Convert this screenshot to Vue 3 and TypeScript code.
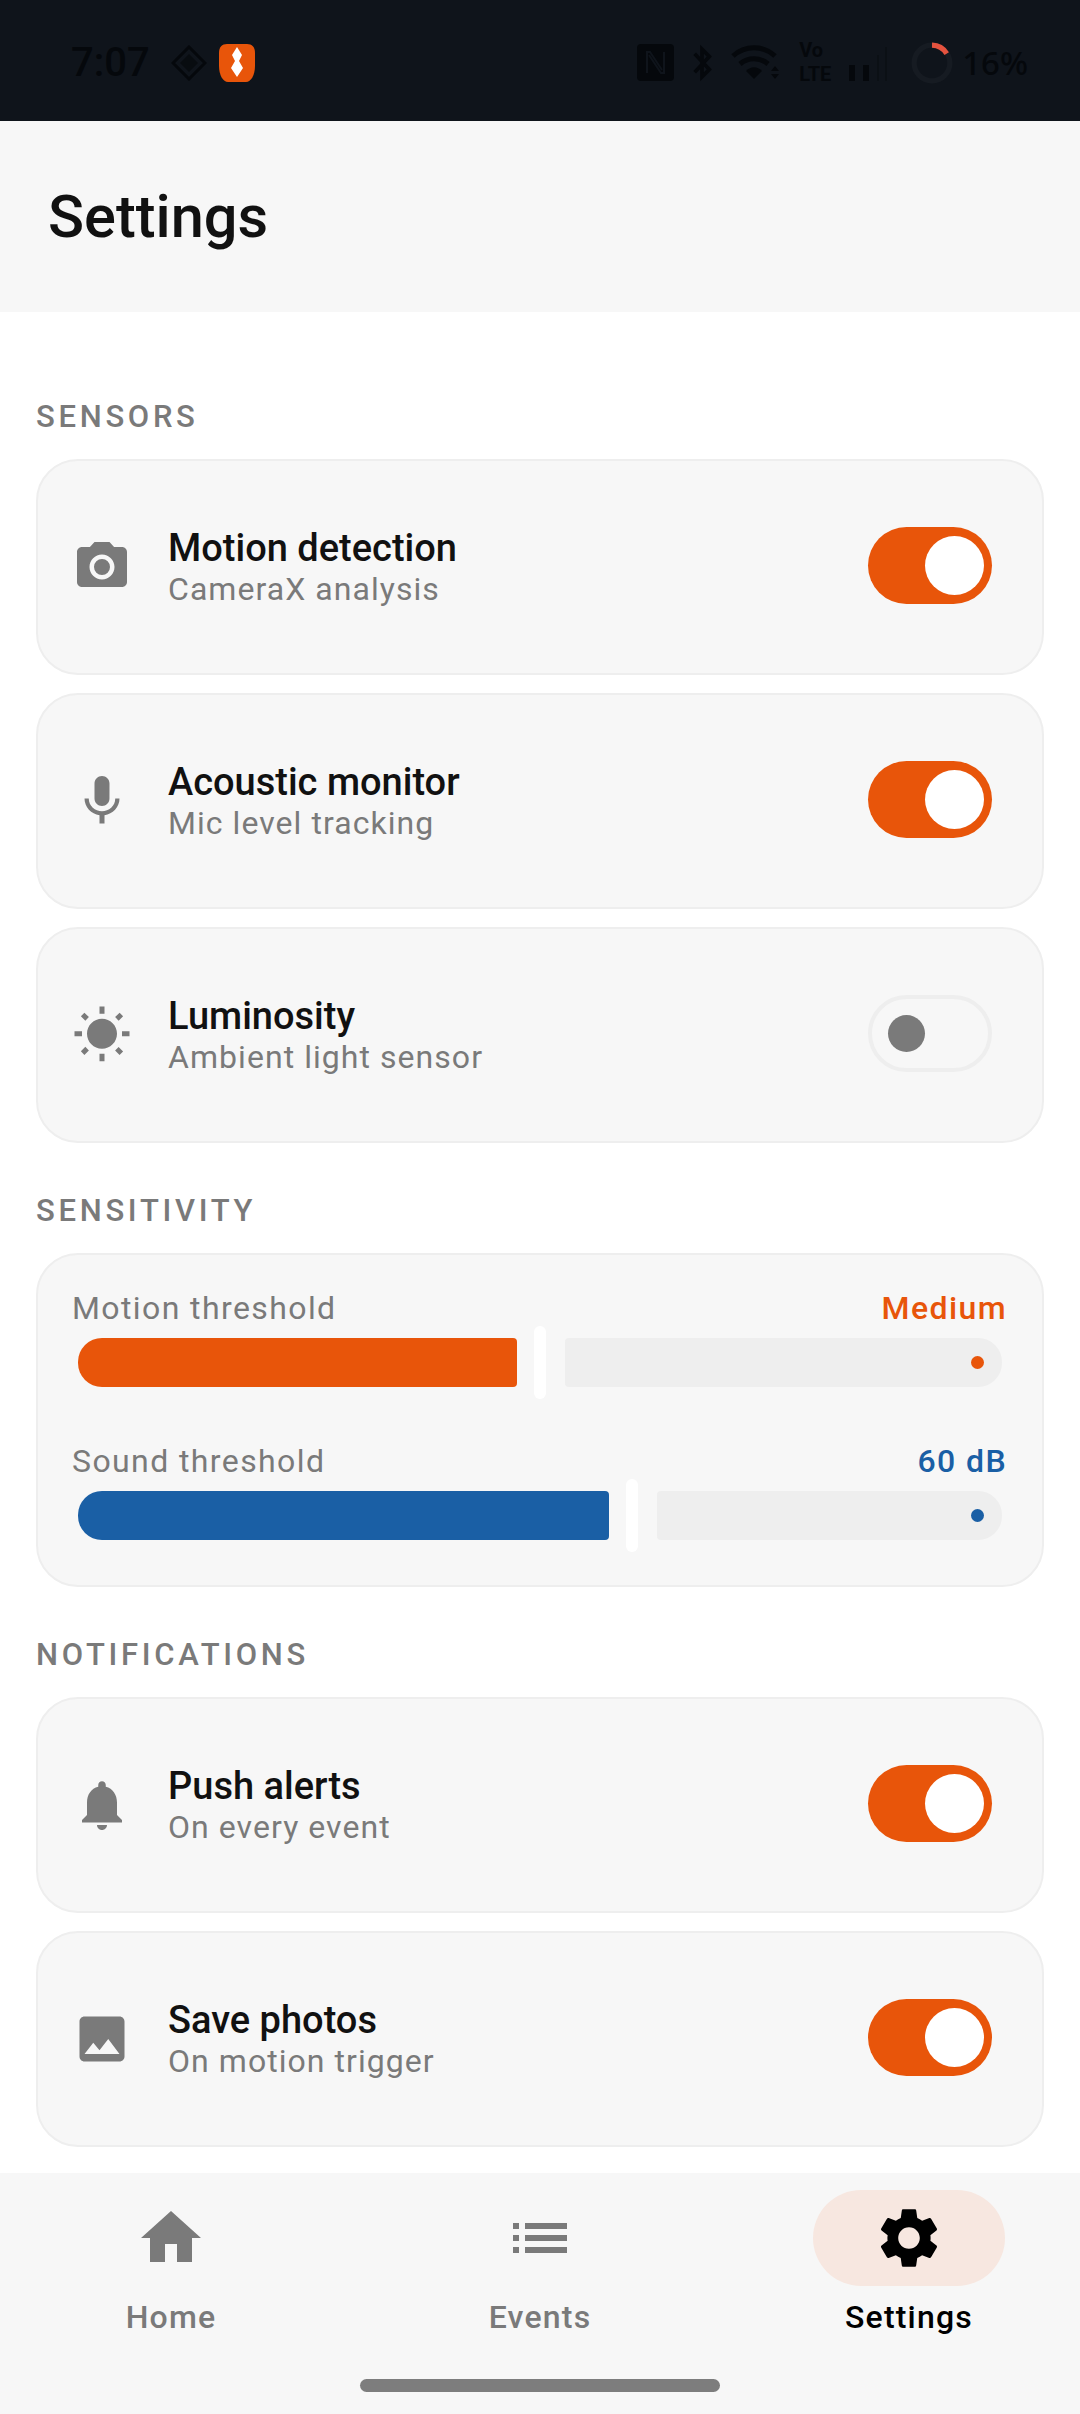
<script setup lang="ts">
interface Row {
  title: string
  sub: string
  icon: string
  on: boolean
}

const P = {
  camera: 'M12 15.2a3.2 3.2 0 1 0 0-6.4 3.2 3.2 0 0 0 0 6.4zM9 2 7.17 4H4c-1.1 0-2 .9-2 2v12c0 1.1.9 2 2 2h16c1.1 0 2-.9 2-2V6c0-1.1-.9-2-2-2h-3.17L15 2H9zm3 15c-2.76 0-5-2.24-5-5s2.24-5 5-5 5 2.24 5 5-2.24 5-5 5z',
  mic: 'M12 14c1.66 0 2.99-1.34 2.99-3L15 5c0-1.66-1.34-3-3-3S9 3.34 9 5v6c0 1.66 1.34 3 3 3zm5.3-3c0 3-2.54 5.1-5.3 5.1S6.7 14 6.7 11H5c0 3.41 2.72 6.23 6 6.72V21h2v-3.28c3.28-.48 6-3.3 6-6.72h-1.7z',
  sun: 'M6.76 4.84l-1.8-1.79-1.41 1.41 1.79 1.79 1.42-1.41zM4 10.5H1v2h3v-2zm9-9.95h-2V3.5h2V.55zm7.45 3.91l-1.41-1.41-1.79 1.79 1.41 1.41 1.79-1.79zm-3.21 13.7l1.79 1.8 1.41-1.41-1.8-1.79-1.4 1.4zM20 10.5v2h3v-2h-3zm-8-5c-3.31 0-6 2.69-6 6s2.69 6 6 6 6-2.69 6-6-2.69-6-6-6zm-1 16.95h2V19.5h-2v2.95zm-7.45-3.91l1.41 1.41 1.79-1.8-1.41-1.41-1.79 1.8z',
  bell: 'M12 22c1.1 0 2-.9 2-2h-4c0 1.1.9 2 2 2zm6-6v-5c0-3.07-1.63-5.64-4.5-6.32V4c0-.83-.67-1.5-1.5-1.5s-1.5.67-1.5 1.5v.68C7.64 5.36 6 7.92 6 11v5l-2 2v1h16v-1l-2-2z',
  image: 'M21 19V5c0-1.1-.9-2-2-2H5c-1.1 0-2 .9-2 2v14c0 1.1.9 2 2 2h14c1.1 0 2-.9 2-2zM8.5 13.5l2.5 3.01L14.5 12l4.5 6H5l3.5-4.5z',
  home: 'M10 20v-6h4v6h5v-8h3L12 3 2 12h3v8z',
  list: 'M3 13h2v-2H3v2zm0 4h2v-2H3v2zm0-8h2V7H3v2zm4 4h14v-2H7v2zm0 4h14v-2H7v2zM7 7v2h14V7H7z',
  gear: 'M19.14 12.94c.04-.3.06-.61.06-.94 0-.32-.02-.64-.07-.94l2.03-1.58c.18-.14.23-.41.12-.61l-1.92-3.32c-.12-.22-.37-.29-.59-.22l-2.39.96c-.5-.38-1.03-.7-1.62-.94l-.36-2.54c-.04-.24-.24-.41-.48-.41h-3.84c-.24 0-.43.17-.47.41l-.36 2.54c-.59.24-1.13.57-1.62.94l-2.39-.96c-.22-.08-.47 0-.59.22L2.74 8.87c-.12.21-.08.47.12.61l2.03 1.58c-.05.3-.09.63-.09.94s.02.64.07.94l-2.03 1.58c-.18.14-.23.41-.12.61l1.92 3.32c.12.22.37.29.59.22l2.39-.96c.5.38 1.03.7 1.62.94l.36 2.54c.05.24.24.41.48.41h3.84c.24 0 .44-.17.47-.41l.36-2.54c.59-.24 1.13-.56 1.62-.94l2.39.96c.22.08.47 0 .59-.22l1.92-3.32c.12-.22.07-.47-.12-.61l-2.01-1.58zM12 15.6c-1.98 0-3.6-1.62-3.6-3.6s1.62-3.6 3.6-3.6 3.6 1.62 3.6 3.6-1.62 3.6-3.6 3.6z',
}

const sensors: Row[] = [
  { title: 'Motion detection', sub: 'CameraX analysis', icon: P.camera, on: true },
  { title: 'Acoustic monitor', sub: 'Mic level tracking', icon: P.mic, on: true },
  { title: 'Luminosity', sub: 'Ambient light sensor', icon: P.sun, on: false },
]

const notifications: Row[] = [
  { title: 'Push alerts', sub: 'On every event', icon: P.bell, on: true },
  { title: 'Save photos', sub: 'On motion trigger', icon: P.image, on: true },
]

const sliders = [
  { label: 'Motion threshold', value: 'Medium', width: 439, tone: 'orange' },
  { label: 'Sound threshold', value: '60 dB', width: 531, tone: 'blue' },
]

const tabs = [
  { label: 'Home', icon: P.home, active: false },
  { label: 'Events', icon: P.list, active: false },
  { label: 'Settings', icon: P.gear, active: true },
]
</script>

<template>
  <div class="page">
    <div class="status">
      <span class="time">7:07</span>
      <svg class="diamond" viewBox="0 0 36 36" width="36" height="36">
        <path d="M18 2 34 18 18 34 2 18Z" fill="none" stroke="#05080c" stroke-width="3" />
        <path d="M18 9 27 18 18 27 9 18Z" fill="#05080c" opacity="0.7" />
      </svg>
      <svg class="shield" viewBox="0 0 36 38" width="36" height="38">
        <path d="M8 0H28C33 0 36 3 36 9V22C36 31 32 38 27 38H9C4 38 0 31 0 22V9C0 3 3 0 8 0Z" fill="#e8550a" />
        <path d="M18 3 23 11 20 17 24 24 18 33 12 24 16 17 13 11Z" fill="#fff" />
      </svg>
      <div class="status-right">
        <svg viewBox="0 0 37 37" width="37" height="37">
          <rect width="37" height="37" rx="4" fill="#05080c" />
          <path d="M10 29V8H13L25 26M27 8V29H24L12 11" fill="none" stroke="#0f141b" stroke-width="2" />
        </svg>
        <svg class="gap-bt" viewBox="0 0 24 40" width="22" height="38">
          <path d="M4 10 20 27 12 35V5L20 13 4 30" fill="none" stroke="#05080c" stroke-width="4" />
        </svg>
        <svg class="gap-wifi" viewBox="0 0 50 38" width="50" height="38">
          <path d="M2 12C14 1 32 1 44 12M9 20C17 13 29 13 37 20" fill="none" stroke="#05080c" stroke-width="5" />
          <path d="M15 27C20 22 26 22 31 27L23 35Z" fill="#05080c" />
          <path d="M40 27 44 22 48 27ZM40 30H48L44 35Z" fill="#05080c" />
        </svg>
        <div class="volte"><span>Vo</span><span>LTE</span></div>
        <svg class="gap-signal" viewBox="0 0 40 36" width="40" height="36">
          <rect x="0" y="20" width="6" height="16" fill="#05080c" />
          <rect x="14" y="20" width="6" height="16" fill="#05080c" />
          <rect x="28" y="10" width="2" height="26" fill="#0b1015" />
          <rect x="36" y="2" width="2" height="34" fill="#0b1015" />
        </svg>
        <svg class="gap-ring" viewBox="0 0 40 40" width="42" height="42">
          <circle cx="20" cy="20" r="17" fill="none" stroke="#161b22" stroke-width="5" />
          <path d="M20 3A17 17 0 0 1 34 11" fill="none" stroke="#e5533f" stroke-width="5" />
        </svg>
        <span class="battery">16%</span>
      </div>
    </div>

    <header class="top">
      <h1>Settings</h1>
    </header>

    <main class="content">
      <h2 class="section first">SENSORS</h2>
      <div class="stack">
        <div v-for="row in sensors" :key="row.title" class="card row">
          <svg class="icon" viewBox="0 0 24 24"><path :d="row.icon" /></svg>
          <div class="text">
            <div class="title">{{ row.title }}</div>
            <div class="sub">{{ row.sub }}</div>
          </div>
          <div class="toggle" :class="{ on: row.on }"><span class="knob"></span></div>
        </div>
      </div>

      <h2 class="section">SENSITIVITY</h2>
      <div class="card sliders">
        <div v-for="s in sliders" :key="s.label" class="slider-block" :class="s.tone">
          <div class="slider-head">
            <span class="slider-label">{{ s.label }}</span>
            <span class="slider-value">{{ s.value }}</span>
          </div>
          <div class="slider">
            <div class="filled" :style="{ width: s.width + 'px' }"></div>
            <div class="handle"></div>
            <div class="rest"><span class="dot"></span></div>
          </div>
        </div>
      </div>

      <h2 class="section">NOTIFICATIONS</h2>
      <div class="stack">
        <div v-for="row in notifications" :key="row.title" class="card row">
          <svg class="icon" viewBox="0 0 24 24"><path :d="row.icon" /></svg>
          <div class="text">
            <div class="title">{{ row.title }}</div>
            <div class="sub">{{ row.sub }}</div>
          </div>
          <div class="toggle" :class="{ on: row.on }"><span class="knob"></span></div>
        </div>
      </div>
    </main>

    <nav class="nav">
      <div class="tabs">
        <div v-for="t in tabs" :key="t.label" class="tab" :class="{ current: t.active }">
          <div class="pill">
            <svg viewBox="0 0 24 24" width="72" height="72"><path :d="t.icon" /></svg>
          </div>
          <span class="tab-label">{{ t.label }}</span>
        </div>
      </div>
      <div class="home-bar"></div>
    </nav>
  </div>
</template>

<style>
html,
body {
  margin: 0;
  background: #fff;
}
</style>

<style scoped>
.page {
  width: 1080px;
  height: 2414px;
  display: flex;
  flex-direction: column;
  background: #fff;
  font-family: Roboto, 'Noto Sans', sans-serif;
  overflow: hidden;
}
.status {
  height: 121px;
  box-sizing: border-box;
  background: #0f141b;
  display: flex;
  align-items: center;
  padding: 4px 52px 0 71px;
  color: #05080c;
  flex: none;
}
.time {
  font-size: 40px;
  font-weight: 500;
  width: 100px;
}
.shield {
  margin-left: 12px;
}
.status-right {
  margin-left: auto;
  display: flex;
  align-items: center;
}
.gap-bt {
  margin-left: 17px;
}
.gap-wifi {
  margin-left: 18px;
}
.volte {
  margin-left: 18px;
  display: flex;
  flex-direction: column;
  font-size: 20px;
  font-weight: 700;
  line-height: 23.5px;
  width: 32px;
}
.gap-signal {
  margin-left: 18px;
}
.gap-ring {
  margin-left: 22px;
}
.battery {
  margin-left: 9px;
  font-size: 33px;
  font-family: 'Noto Sans', sans-serif;
  font-weight: 500;
}
.top {
  height: 191px;
  background: #f7f7f7;
  flex: none;
  display: flex;
  align-items: center;
  padding: 0 48px;
}
.top h1 {
  margin: 0;
  font-size: 59.5px;
  font-weight: 500;
  color: #111;
}
.content {
  flex: 1;
  padding: 0 36px;
}
.section {
  margin: 48px 0 22px;
  font-size: 31px;
  line-height: 40px;
  font-weight: 500;
  letter-spacing: 3.7px;
  color: #7a7a7a;
}
.section.first {
  margin-top: 85px;
}
.stack {
  display: flex;
  flex-direction: column;
  gap: 18px;
}
.card {
  box-sizing: border-box;
  background: #f7f7f7;
  border: 2px solid #eeeeee;
  border-radius: 42px;
}
.row {
  height: 216px;
  display: flex;
  align-items: center;
  padding: 0 50px 0 34px;
}
.icon {
  width: 60px;
  height: 60px;
  fill: #7a7a7a;
  flex: none;
}
.text {
  margin: 2px 0 0 36px;
  flex: 1;
}
.title {
  font-size: 38px;
  line-height: 42px;
  font-weight: 500;
  color: #111;
}
.sub {
  font-size: 32px;
  line-height: 40px;
  letter-spacing: 1.05px;
  color: #7a7a7a;
}
.toggle {
  box-sizing: border-box;
  width: 124px;
  height: 77px;
  margin-bottom: 3px;
  border-radius: 39px;
  border: 4px solid #eeeeee;
  background: #f7f7f7;
  display: flex;
  align-items: center;
  padding-left: 16px;
}
.knob {
  width: 37px;
  height: 37px;
  border-radius: 50%;
  background: #7a7a7a;
}
.toggle.on {
  border: none;
  background: #e8550a;
  justify-content: flex-end;
  padding: 0 8px 0 0;
}
.toggle.on .knob {
  width: 59px;
  height: 59px;
  background: #fff;
}
.sliders {
  height: 334px;
  padding: 31px 35px 0 34px;
  display: flex;
  flex-direction: column;
  gap: 40px;
}
.slider-head {
  display: flex;
  justify-content: space-between;
  height: 40px;
  line-height: 44px;
  font-size: 32px;
  letter-spacing: 1.4px;
}
.slider-label {
  color: #7a7a7a;
}
.slider-value {
  font-weight: 500;
}
.orange .slider-value {
  color: #e8550a;
}
.blue .slider-value {
  color: #1a5fa5;
}
.slider {
  display: flex;
  align-items: center;
  height: 73px;
  margin: 0 5px 0 6px;
}
.filled {
  height: 49px;
  border-radius: 24px 4px 4px 24px;
  flex: none;
}
.orange .filled,
.orange .dot {
  background: #e8550a;
}
.blue .filled,
.blue .dot {
  background: #1a5fa5;
}
.handle {
  width: 12px;
  height: 73px;
  margin: 0 19px 0 17px;
  background: #fff;
  border-radius: 6px;
  flex: none;
}
.rest {
  flex: 1;
  height: 49px;
  background: #eeeeee;
  border-radius: 4px 24px 24px 4px;
  display: flex;
  align-items: center;
  justify-content: flex-end;
  padding-right: 18px;
}
.dot {
  width: 13px;
  height: 13px;
  border-radius: 50%;
}
.nav {
  height: 241px;
  flex: none;
  background: #f7f7f7;
  display: flex;
  flex-direction: column;
  align-items: center;
  box-sizing: border-box;
  padding-top: 17px;
}
.tabs {
  width: 100%;
  box-sizing: border-box;
  padding: 0 75px;
  display: flex;
  justify-content: space-between;
}
.tab {
  width: 192px;
  display: flex;
  flex-direction: column;
  align-items: center;
}
.pill {
  width: 192px;
  height: 96px;
  border-radius: 48px;
  display: flex;
  align-items: center;
  justify-content: center;
}
.pill svg {
  fill: #7a7a7a;
}
.tab-label {
  margin-top: 11px;
  font-size: 32px;
  line-height: 40px;
  font-weight: 500;
  letter-spacing: 1.2px;
  color: #7a7a7a;
}
.tab.current .pill {
  background: #f7e7e0;
}
.tab.current .pill svg {
  fill: #000;
}
.tab.current .tab-label {
  color: #000;
}
.home-bar {
  width: 360px;
  height: 13px;
  border-radius: 7px;
  background: #7d7d7d;
  margin-top: 42px;
}
</style>
